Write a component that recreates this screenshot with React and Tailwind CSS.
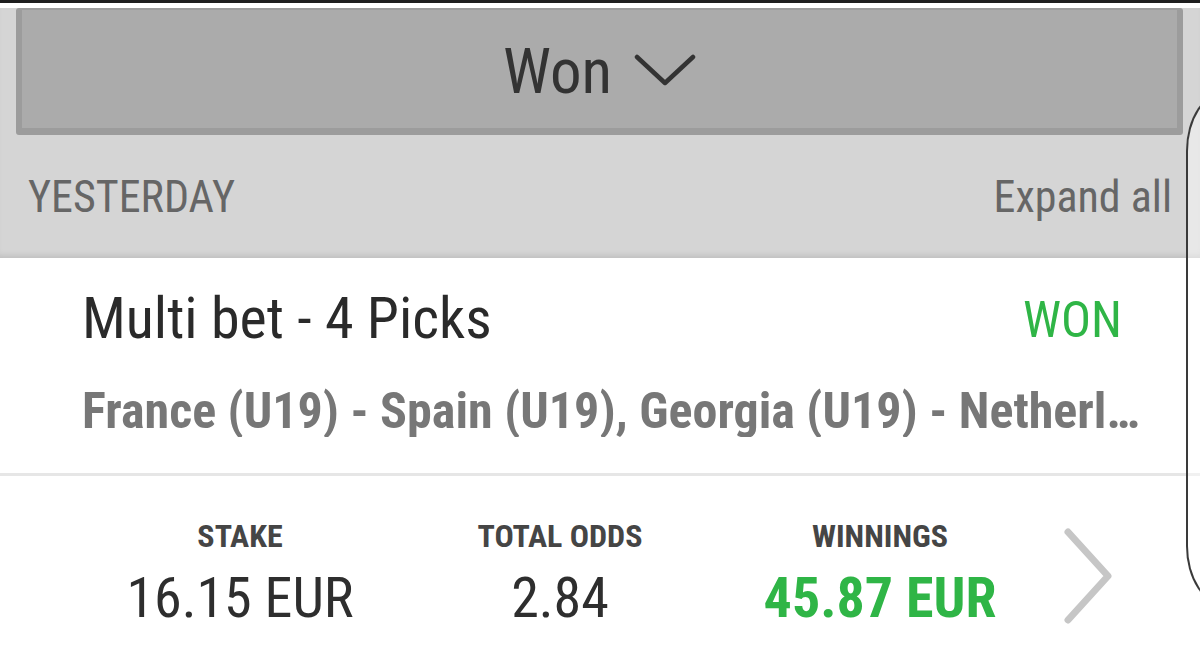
function Stat({ label, value, green }) {
    return (
        <div className="flex w-[320px] flex-col items-center">
            <p className="text-[32px] leading-[32px] font-bold text-[#454545]">{label}</p>
            <p className={`mt-[18px] text-[56px] leading-[56px] ${green ? 'font-bold text-[#2fb546]' : 'text-[#2e2e2e]'}`}>
                {value}
            </p>
        </div>
    );
}

export default function App() {
    return (
        <div className="relative h-[657px] w-[1200px] overflow-hidden bg-white font-[Roboto,'Noto_Sans',sans-serif] [font-stretch:87%]">
            <div className="h-[3px] bg-[#1e1e1e]" />

            {/* filter + day header */}
            <div className="bg-[#d5d5d5] shadow-[inset_0_-6px_6px_-4px_rgba(0,0,0,0.12)]">
                <div className="ml-[16px] mt-[5px] flex h-[127px] w-[1167px] items-center justify-center gap-[22px] rounded-[3px] border-x-[6px] border-t-[2px] border-b-[7px] border-[#9c9c9c] bg-[#ababab]">
                    <span className="mt-[4px] text-[63px] leading-[63px] text-[#333]">Won</span>
                    <svg width="62" height="32" viewBox="0 0 62 32" fill="none" className="mt-[2px]">
                        <path d="M3 3 L31 29 L59 3" stroke="#333" strokeWidth="4.5" strokeLinecap="round" strokeLinejoin="round" />
                    </svg>
                </div>
                <div className="flex h-[123px] items-center justify-between pl-[28px] pr-[28px]">
                    <span className="text-[44px] leading-[44px] text-[#666]">YESTERDAY</span>
                    <span className="text-[44px] leading-[44px] text-[#666]">Expand all</span>
                </div>
            </div>

            {/* bet card */}
            <div className="border-b-[3px] border-[#e6e6e6] pt-[31px] pb-[36px] pl-[82px] pr-[78px]">
                <div className="flex items-start justify-between">
                    <span className="text-[58px] leading-[59px] text-[#2a2a2a]">Multi bet - 4 Picks</span>
                    <span className="mt-[6px] text-[50px] leading-[50px] text-[#2fb546]">WON</span>
                </div>
                <p className="mt-[38px] w-[1058px] truncate text-[50px] leading-[51px] font-bold text-[#777]">
                    France (U19) - Spain (U19), Georgia (U19) - Netherlands (U19), Portugal (U19) - Italy (U19)
                </p>
            </div>

            <div className="flex items-start pt-[44px] pl-[80px]">
                <Stat label="STAKE" value="16.15 EUR" />
                <Stat label="TOTAL ODDS" value="2.84" />
                <Stat label="WINNINGS" value="45.87 EUR" green />
                <svg width="48" height="96" viewBox="0 0 48 96" fill="none" className="ml-[24px] mt-[8px]">
                    <path d="M4 4 L44 48 L4 92" stroke="#c6c6c6" strokeWidth="7" strokeLinecap="round" strokeLinejoin="round" />
                </svg>
            </div>

            {/* curved phone edge */}
            <div className="absolute left-[1186px] top-[91px] h-[515px] w-[60px] rounded-tl-[40px_60px] rounded-bl-[40px_60px] border-l-[2px] border-y-[2px] border-[#3a3a3a] bg-white/45" />
        </div>
    );
}
